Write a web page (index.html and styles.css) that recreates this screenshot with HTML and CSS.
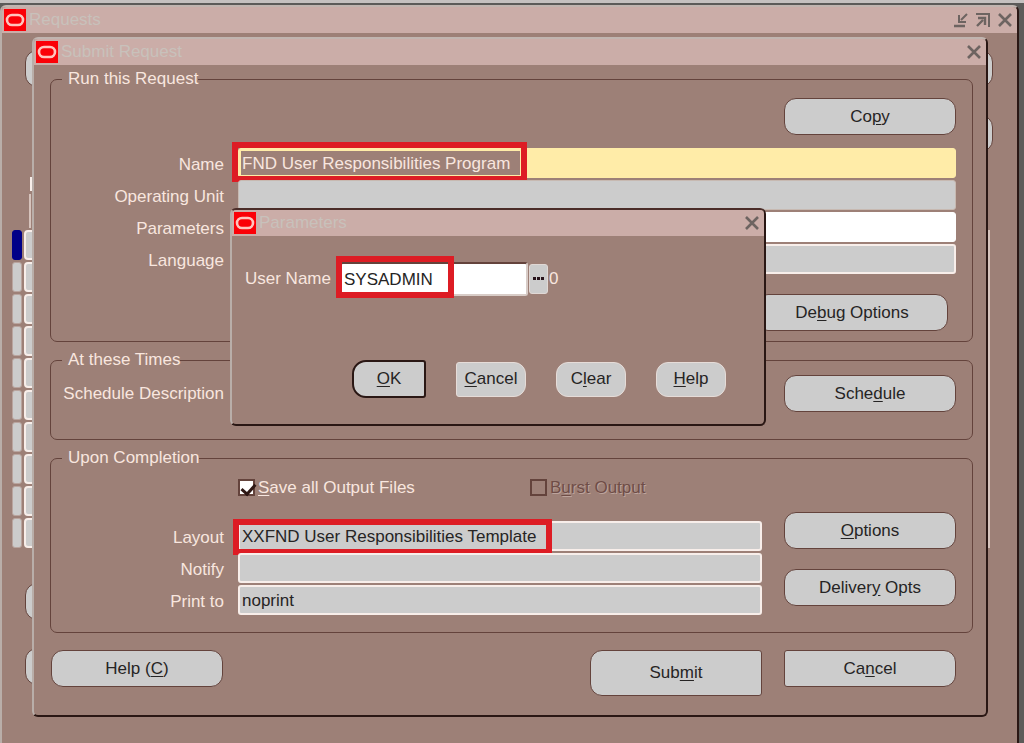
FILE: index.html
```html
<!DOCTYPE html>
<html lang="en">
<head>
    <meta charset="UTF-8">
    <title>Submit Request</title>
    <meta name="viewport" content="width=device-width, initial-scale=1.0">
    <link rel="stylesheet" href="styles.css">
</head>
<body>
<!-- Icons shared by the title bars -->
<svg class="symbols" aria-hidden="true">
    <symbol id="icon-logo" viewBox="0 0 22 22">
        <rect width="22" height="22" fill="#fb0007"/>
        <rect x="3" y="6" width="16" height="10" rx="5" fill="none" stroke="#ffc4bd" stroke-width="2.6"/>
    </symbol>
    <symbol id="icon-close" viewBox="0 0 16 16">
        <path d="M2 2L14 14M14 2L2 14" fill="none" stroke="#6d6461" stroke-width="2.6"/>
    </symbol>
    <symbol id="icon-minimize" viewBox="0 0 16 16">
        <path d="M1 14H12" fill="none" stroke="#6d6461" stroke-width="2.4"/>
        <path d="M14 2L8 8M6 3V10H13" fill="none" stroke="#6d6461" stroke-width="2"/>
    </symbol>
    <symbol id="icon-restore" viewBox="0 0 16 16">
        <path d="M1 2H14V15" fill="none" stroke="#6d6461" stroke-width="2"/>
        <path d="M2 14L8 8M3 6H10V13" fill="none" stroke="#6d6461" stroke-width="2.4"/>
    </symbol>
</svg>

<div class="window requests">
    <div class="titlebar">
        <svg class="logo"><use href="#icon-logo"/></svg>
        <span class="title">Requests</span>
        <button class="win-btn" aria-label="Minimize"><svg><use href="#icon-minimize"/></svg></button>
        <button class="win-btn" aria-label="Restore"><svg><use href="#icon-restore"/></svg></button>
        <button class="win-btn" aria-label="Close"><svg><use href="#icon-close"/></svg></button>
    </div>
    <div class="requests-body">
        <div class="back-bar">
            <button class="btn" aria-label="Refresh Data"></button>
            <button class="btn" aria-label="Submit a New Request"></button>
        </div>
        <div class="back-bar back-bar-end">
            <button class="btn" aria-label="Copy Single Request"></button>
        </div>
        <div class="back-head"></div>
        <div class="back-line"></div>
        <div class="back-rows">
            <div class="back-row current"><span></span><span></span></div>
            <div class="back-row"><span></span><span></span></div>
            <div class="back-row"><span></span><span></span></div>
            <div class="back-row"><span></span><span></span></div>
            <div class="back-row"><span></span><span></span></div>
            <div class="back-row"><span></span><span></span></div>
            <div class="back-row"><span></span><span></span></div>
            <div class="back-row"><span></span><span></span></div>
            <div class="back-row"><span></span><span></span></div>
            <div class="back-row"><span></span><span></span></div>
        </div>
        <div class="back-bar back-foot">
            <button class="btn" aria-label="Hold Request"></button>
            <button class="btn" aria-label="Cancel Request"></button>
        </div>
    </div>
</div>

<form class="window submit-request">
    <div class="titlebar">
        <svg class="logo"><use href="#icon-logo"/></svg>
        <span class="title">Submit Request</span>
        <button type="button" class="win-btn" aria-label="Close"><svg><use href="#icon-close"/></svg></button>
    </div>
    <div class="submit-body">
        <fieldset class="run">
            <legend>Run this Request</legend>
            <button type="button" class="btn">Co<u>p</u>y</button>
            <div class="rows">
                <div class="row">
                    <label for="name">Name</label>
                    <div class="field field-required">
                        <input type="text" id="name" class="selected" value="FND User Responsibilities Program">
                        <span class="mark mark-name"></span>
                    </div>
                </div>
                <div class="row">
                    <label for="unit">Operating Unit</label>
                    <div class="field"><input type="text" id="unit"></div>
                </div>
                <div class="row">
                    <label for="parameters">Parameters</label>
                    <div class="field field-white"><input type="text" id="parameters"></div>
                </div>
                <div class="row">
                    <label for="language">Language</label>
                    <div class="field field-edge"><input type="text" id="language"></div>
                </div>
            </div>
            <button type="button" class="btn btn-debug">De<u>b</u>ug Options</button>
        </fieldset>

        <fieldset class="times">
            <legend>At these Times</legend>
            <span class="schedule-label">Schedule Description</span>
            <button type="button" class="btn">Sche<u>d</u>ule</button>
        </fieldset>

        <fieldset class="completion">
            <legend>Upon Completion</legend>
            <div class="completion-fields">
                <div class="checks">
                    <label class="check"><input type="checkbox" checked><span><u>S</u>ave all Output Files</span></label>
                    <label class="check check-disabled"><input type="checkbox" disabled><span>B<u>u</u>rst Output</span></label>
                </div>
                <div class="rows">
                    <div class="row">
                        <label for="layout">Layout</label>
                        <div class="field field-edge">
                            <input type="text" id="layout" value="XXFND User Responsibilities Template">
                            <span class="mark mark-layout"></span>
                        </div>
                    </div>
                    <div class="row">
                        <label for="notify">Notify</label>
                        <div class="field field-edge"><input type="text" id="notify"></div>
                    </div>
                    <div class="row">
                        <label for="print">Print to</label>
                        <div class="field field-edge"><input type="text" id="print" value="noprint"></div>
                    </div>
                </div>
            </div>
            <div class="completion-buttons">
                <button type="button" class="btn"><u>O</u>ptions</button>
                <button type="button" class="btn">Deliver<u>y</u> Opts</button>
            </div>
        </fieldset>

        <div class="actions">
            <button type="button" class="btn">Help (<u>C</u>)</button>
            <button type="submit" class="btn btn-submit">Sub<u>m</u>it</button>
            <button type="button" class="btn btn-cancel">Ca<u>n</u>cel</button>
        </div>
    </div>
</form>

<form class="window parameters">
    <div class="titlebar">
        <svg class="logo"><use href="#icon-logo"/></svg>
        <span class="title">Parameters</span>
        <button type="button" class="win-btn" aria-label="Close"><svg><use href="#icon-close"/></svg></button>
    </div>
    <div class="parameters-body">
        <div class="user-row">
            <label for="user">User Name</label>
            <div class="field user-field">
                <input type="text" id="user" value="SYSADMIN">
                <span class="mark mark-user"></span>
            </div>
            <button type="button" class="lov" aria-label="List of values"><svg viewBox="0 0 14 4"><path d="M1 0h3v3h-3zM5 0h3v3h-3zM9 0h3v3h-3z" fill="#28131c"/></svg></button>
            <span class="user-id">0</span>
        </div>
        <div class="dialog-buttons">
            <button type="submit" class="small-btn small-ok"><u>O</u>K</button>
            <button type="button" class="small-btn small-cancel"><u>C</u>ancel</button>
            <button type="button" class="small-btn">C<u>l</u>ear</button>
            <button type="button" class="small-btn"><u>H</u>elp</button>
        </div>
    </div>
</form>
</body>
</html>
```
FILE: styles.css
```css
:root {
    --brown: #9d8077;
    --bar: #cbada8;
    --line: #64433c;
    --dark: #2a1714;
    --grey: #cccccc;
    --text: #f8e6df;
    --edge: #f8eeea;
    --ink: #262424;
}
* { box-sizing: border-box; }
body { margin: 0; min-height: 100vh; overflow: hidden; background: linear-gradient(#c5c1c0 3px, #5c5b59 3px); }
body, button, input { font-family: "Liberation Sans", Arial, sans-serif; font-size: 17px; line-height: 20px; }
button { padding: 0; color: var(--ink); cursor: pointer; }
u { text-underline-offset: 2px; }
.symbols { position: absolute; width: 0; height: 0; }

/* Windows */
.window { position: absolute; background: var(--brown); color: var(--text);
    border: 2px solid var(--dark); border-left-color: #b9aea9; border-top-color: #c1b5b0; border-radius: 6px;
}
.requests { left: 0; right: 5px; top: 5px; bottom: 0; border-bottom: 0; border-radius: 6px 6px 0 0; overflow: hidden; }
.submit-request { left: 32px; right: 36px; top: 37px; }
.parameters { left: 230px; top: 208px; width: 536px; border-top-color: #4b2d29; }
.titlebar { display: flex; align-items: center; height: 26px; padding: 0 4px 0 2px; background: var(--bar); border-radius: 4px 4px 0 0; }
.logo { width: 22px; height: 22px; flex: none; }
.title { flex: 1; margin-left: 3px; color: #c8c1bb; }
.win-btn { width: 16px; height: 16px; margin-left: 6px; border: 0; background: none; }
.win-btn svg { display: block; width: 16px; height: 16px; }

/* Buttons */
.btn { width: 172px; height: 37px; border: 1px solid var(--line); border-radius: 12px; background: var(--grey); }
.btn-debug { width: 192px; margin-right: 8px; }
.btn-submit { height: 46px; border-radius: 12px 3px 3px 12px; }
.btn-cancel { border-radius: 3px 12px 12px 3px; }

/* Requests window, mostly covered */
.requests-body { padding: 17px 24px 0 10px; }
.back-bar { display: flex; justify-content: space-between; margin-left: 13px; margin-bottom: 28px; }
.back-bar-end { justify-content: flex-end; margin-bottom: 25px; }
.back-head { width: 3px; height: 14px; margin-left: 18px; background: var(--edge); }
.back-line { width: 2px; height: 34px; margin: 3px 0 2px 17px; background: #d6c3bc; }
.back-rows { display: flex; flex-direction: column; gap: 2px; margin-right: 3px; border-right: 2px solid #d6c3bc; }
.back-row { display: flex; gap: 2px; }
.back-row span { width: 10px; height: 30px; background: var(--grey); border: 1px solid #b9a59f; border-radius: 3px; }
.back-row span + span { width: 60px; border: 2px solid var(--edge); border-radius: 4px; }
.back-row.current span:first-child { background: #000088; border-color: #000088; }
.back-foot { flex-direction: column; gap: 28px; margin-top: 35px; }

/* Submit Request */
.submit-body { padding: 4px 13px 19px 16px; }
fieldset { min-width: 0; margin: 0 0 8px; padding: 0 16px 0 6px; border: 1px solid var(--line); border-radius: 7px; }
legend { margin-left: 5px; padding: 0 0 0 6px; }
.run { display: flex; flex-direction: column; align-items: flex-end; padding-top: 9px; padding-bottom: 10px; }
.run .rows { align-self: stretch; margin: 13px 0 20px; }
.rows { display: flex; flex-direction: column; gap: 2px; }
.row { display: grid; grid-template-columns: 167px 1fr; column-gap: 14px; align-items: center; }
.row label { text-align: right; padding-top: 4px; }
.field { position: relative; height: 30px; padding: 2px; background: var(--grey); border: 1px solid #c7b9b1; border-radius: 3px; }
.field input { display: block; width: 100%; height: 24px; padding: 1px 1px 0; border: 0; outline: 0; background: none; color: var(--ink); }
.field-edge { padding: 1px; border: 2px solid var(--edge); }
.field-white { background: #fff; border-color: #fff; }
.field-required { background: #ffeca8; border-color: #ffeca8; }
.field .selected { width: 279px; background: var(--brown); color: var(--text); }

/* Red highlight boxes */
.mark { position: absolute; border: 6px solid #dd1c24; pointer-events: none; }
.mark-name { left: -7px; top: -7px; width: 295px; height: 40px; }
.mark-layout { left: -7px; top: -4px; width: 319px; height: 36px; }
.mark-user { left: -6px; top: -8px; width: 118px; height: 42px; }

.times { display: flex; align-items: center; justify-content: space-between; padding-top: 5px; padding-bottom: 27px; }
.schedule-label { width: 167px; text-align: right; white-space: nowrap; }
.completion { display: flex; gap: 22px; padding-top: 8px; padding-bottom: 17px; margin-bottom: 17px; }
.completion-fields { flex: 1; }
.checks { display: grid; grid-template-columns: 292px 1fr; margin: 0 0 23px 181px; }
.check { display: flex; align-items: center; gap: 3px; }
.check span { padding-top: 2px; }
.check input { appearance: none; width: 17px; height: 17px; margin: 0; border: 2px solid var(--line); }
.check input:checked { background: #fff; position: relative; }
.check input:checked::after { content: ""; position: absolute; left: 4px; top: 0; width: 6px; height: 11px;
    border: solid #2f1815; border-width: 0 3px 3px 0; transform: rotate(42deg);
}
.check-disabled { color: #6f4d47; text-shadow: 1px 1px #bda49c; }
.completion-buttons { display: flex; flex-direction: column; gap: 20px; padding-top: 36px; }
.actions { display: flex; align-items: flex-start; gap: 22px; margin: 0 17px 0 1px; }
.actions .btn-submit { margin-left: auto; }

/* Parameters dialog */
.parameters-body { padding: 26px 13px; }
.user-row { display: flex; align-items: center; }
.user-row label { width: 87px; margin-right: 8px; white-space: nowrap; }
.user-field { width: 188px; height: 34px; padding: 3px 1px; background: #fff; border: 2px solid #d8ccc7; border-top-color: var(--line); }
.lov { display: flex; align-items: center; justify-content: center; width: 19px; height: 30px; margin: 0 1px 0 1px;
    background: var(--grey); border: 1px solid #e0d8d5; border-radius: 3px;
}
.lov svg { width: 14px; height: 4px; }
.dialog-buttons { display: grid; grid-template-columns: 74px repeat(3, 70px); align-items: center; gap: 30px; margin: 64px 0 0 107px; }
.small-btn { height: 35px; background: var(--grey); border: 1px solid #e6dcd8; border-radius: 12px; }
.small-ok { height: 38px; border: 2px solid var(--dark); border-radius: 14px 3px 3px 14px; }
.small-cancel { border-radius: 3px 12px 12px 3px; }
```
